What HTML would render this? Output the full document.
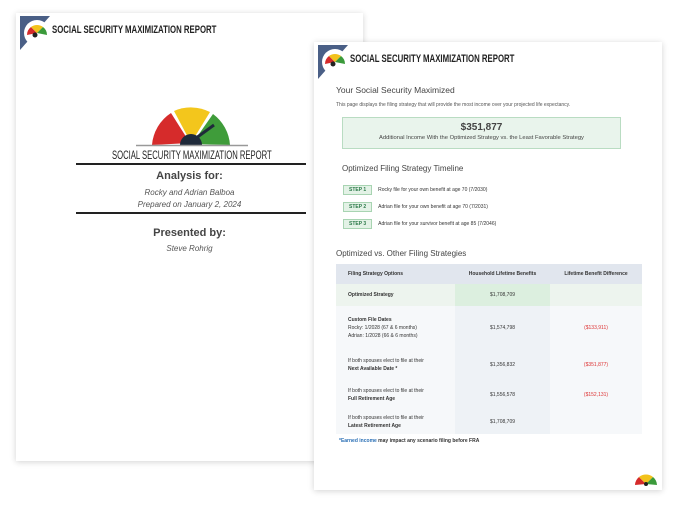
<!DOCTYPE html><html><head><style>
body{margin:0;width:678px;height:510px;background:#fff;position:relative;overflow:hidden;font-family:"Liberation Sans",sans-serif;}
.pg{position:absolute;background:#fff;box-shadow:0 1px 6px rgba(0,0,0,.18);}
.a{position:absolute;white-space:nowrap;}
.cond{font-family:"Liberation Sans",sans-serif;font-weight:bold;color:#222;transform-origin:left center;}
.g{color:#555;}
.c{position:absolute;box-sizing:border-box;font-size:5px;color:#333;display:flex;align-items:center;}
.c.m{justify-content:center;}
.c.l{padding-left:12px;line-height:8px;}
</style></head><body>
<!-- page 1 -->
<div class="pg" style="left:16px;top:13px;width:347px;height:448px;">
<svg class="a" style="left:4px;top:3px" width="36" height="36"><polygon points="0,0 30,0 0,34" fill="#4a5f86"/><circle cx="17" cy="17" r="13" fill="#fff"/><path d="M7,19 A10,10 0 0 1 11,11 L17,17Z" fill="#d52a2a"/><path d="M11,11 A10,10 0 0 1 23,11 L17,17Z" fill="#f2c21b"/><path d="M23,11 A10,10 0 0 1 27,19 L17,17Z" fill="#3b9a3b"/><circle cx="15" cy="19" r="2.5" fill="#222"/></svg>
<div class="a cond" style="left:36px;top:11px;font-size:11px;transform:scaleX(.71)">SOCIAL SECURITY MAXIMIZATION REPORT</div>
<svg class="a" style="left:118px;top:92px" width="115" height="44"><path d="M18,40 A42,42 0 0 1 37,8 L56,38Z" fill="#d62b2b"/><path d="M40,6 A42,42 0 0 1 76,7 L57,38Z" fill="#f3c61c"/><path d="M79,9 A42,42 0 0 1 96,40 L58,39Z" fill="#3f9c3a"/><path d="M46,40 A11,11 0 0 1 68,40Z" fill="#1f2a3a"/><line x1="58" y1="36" x2="80" y2="20" stroke="#1f2a3a" stroke-width="3"/><line x1="2" y1="40.5" x2="114" y2="40.5" stroke="#999" stroke-width="1.5"/></svg>
<div class="a cond" style="left:96px;top:135px;font-size:12px;font-weight:normal;transform:scaleX(.64)">SOCIAL SECURITY MAXIMIZATION REPORT</div>
<div class="a" style="left:60px;top:150px;width:230px;height:2px;background:#222"></div>
<div class="a" style="left:0;width:347px;text-align:center;top:157px;font-size:11px;font-weight:bold;color:#444">Analysis for:</div>
<div class="a g" style="left:0;width:347px;text-align:center;top:174px;font-size:8px;font-style:italic;line-height:12px">Rocky and Adrian Balboa<br>Prepared on January 2, 2024</div>
<div class="a" style="left:60px;top:199px;width:230px;height:2px;background:#222"></div>
<div class="a" style="left:0;width:347px;text-align:center;top:214px;font-size:11px;font-weight:bold;color:#444">Presented by:</div>
<div class="a g" style="left:0;width:347px;text-align:center;top:231px;font-size:8px;font-style:italic">Steve Rohrig</div>
</div>
<!-- page 2 -->
<div class="pg" style="left:314px;top:42px;width:348px;height:448px;">
<svg class="a" style="left:4px;top:3px" width="36" height="36"><polygon points="0,0 30,0 0,34" fill="#4a5f86"/><circle cx="17" cy="17" r="13" fill="#fff"/><path d="M7,19 A10,10 0 0 1 11,11 L17,17Z" fill="#d52a2a"/><path d="M11,11 A10,10 0 0 1 23,11 L17,17Z" fill="#f2c21b"/><path d="M23,11 A10,10 0 0 1 27,19 L17,17Z" fill="#3b9a3b"/><circle cx="15" cy="19" r="2.5" fill="#222"/></svg>
<div class="a cond" style="left:36px;top:11px;font-size:11px;transform:scaleX(.71)">SOCIAL SECURITY MAXIMIZATION REPORT</div>
<div class="a" style="left:22px;top:43px;font-size:8.5px;color:#444">Your Social Security Maximized</div>
<div class="a g" style="left:22px;top:60px;font-size:5px">This page displays the filing strategy that will provide the most income over your projected life expectancy.</div>
<div class="a" style="left:28px;top:75px;width:277px;height:30px;background:#e9f4ec;border:1px solid #b9dcc2;text-align:center">
<div style="font-size:10px;color:#444;margin-top:4px;font-weight:bold">$351,877</div>
<div style="font-size:5.8px;color:#444;margin-top:2px">Additional Income With the Optimized Strategy vs. the Least Favorable Strategy</div></div>
<div class="a" style="left:28px;top:122px;font-size:8px;color:#444">Optimized Filing Strategy Timeline</div>
<div class="a" style="left:29px;top:140px;font-size:5px;color:#333;line-height:17px">
<div><span style="background:#e3f2e6;border:1px solid #a8d4b2;color:#2d7a4a;font-weight:bold;padding:1px 5px;margin-right:6px">STEP 1</span>Rocky file for your own benefit at age 70 (7/2030)</div>
<div><span style="background:#e3f2e6;border:1px solid #a8d4b2;color:#2d7a4a;font-weight:bold;padding:1px 5px;margin-right:6px">STEP 2</span>Adrian file for your own benefit at age 70 (7/2031)</div>
<div><span style="background:#e3f2e6;border:1px solid #a8d4b2;color:#2d7a4a;font-weight:bold;padding:1px 5px;margin-right:6px">STEP 3</span>Adrian file for your survivor benefit at age 85 (7/2046)</div></div>
<div class="a" style="left:22px;top:207px;font-size:8px;color:#444">Optimized vs. Other Filing Strategies</div>
<!-- table -->
<div class="c l" style="left:22px;top:222px;width:306px;height:20px;background:#e1e6ee;font-weight:bold">Filing Strategy Options</div>
<div class="c m" style="left:141px;top:222px;width:95px;height:20px;font-weight:bold">Household Lifetime Benefits</div>
<div class="c m" style="left:236px;top:222px;width:92px;height:20px;font-weight:bold">Lifetime Benefit Difference</div>
<div class="a" style="left:22px;top:242px;width:306px;height:22px;background:#edf4ee"></div>
<div class="a" style="left:22px;top:264px;width:306px;height:128px;background:#f6f8fa"></div>
<div class="a" style="left:141px;top:264px;width:95px;height:128px;background:#eef2f6"></div>
<div class="a" style="left:141px;top:242px;width:95px;height:22px;background:#dcefdf"></div>
<div class="c l" style="left:22px;top:242px;width:119px;height:22px;font-weight:bold">Optimized Strategy</div>
<div class="c m" style="left:141px;top:242px;width:95px;height:22px">$1,708,709</div>
<div class="c l" style="left:22px;top:264px;width:119px;height:43px"><div><b>Custom File Dates</b><br>Rocky: 1/2028 (67 &amp; 6 months)<br>Adrian: 1/2028 (66 &amp; 6 months)</div></div>
<div class="c m" style="left:141px;top:264px;width:95px;height:43px">$1,574,798</div>
<div class="c m" style="left:236px;top:264px;width:92px;height:43px;color:#d33">($133,911)</div>
<div class="c l" style="left:22px;top:307px;width:119px;height:31px"><div>If both spouses elect to file at their<br><b>Next Available Date *</b></div></div>
<div class="c m" style="left:141px;top:307px;width:95px;height:31px">$1,356,832</div>
<div class="c m" style="left:236px;top:307px;width:92px;height:31px;color:#d33">($351,877)</div>
<div class="c l" style="left:22px;top:338px;width:119px;height:30px"><div>If both spouses elect to file at their<br><b>Full Retirement Age</b></div></div>
<div class="c m" style="left:141px;top:338px;width:95px;height:30px">$1,556,578</div>
<div class="c m" style="left:236px;top:338px;width:92px;height:30px;color:#d33">($152,131)</div>
<div class="c l" style="left:22px;top:368px;width:119px;height:24px"><div>If both spouses elect to file at their<br><b>Latest Retirement Age</b></div></div>
<div class="c m" style="left:141px;top:368px;width:95px;height:24px">$1,708,709</div>
<div class="a" style="left:25px;top:396px;font-size:5px;font-weight:bold;color:#333"><span style="color:#2a6fb5">*Earned income</span> may impact any scenario filing before FRA</div>
<svg class="a" style="left:320px;top:430px" width="24" height="14"><path d="M1,13 A11,11 0 0 1 5,5 L12,12Z" fill="#d52a2a"/><path d="M5,5 A11,11 0 0 1 19,5 L12,12Z" fill="#f2c21b"/><path d="M19,5 A11,11 0 0 1 23,13 L12,12Z" fill="#3b9a3b"/><circle cx="12" cy="12" r="2" fill="#222"/></svg>
</div>
</body></html>
